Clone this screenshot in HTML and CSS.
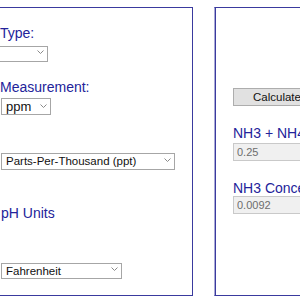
FILE: index.html
```html
<!DOCTYPE html>
<html lang="en">
<head>
  <meta charset="UTF-8">
  <title>Ammonia Calculator</title>
  <link rel="stylesheet" href="styles.css">
</head>
<body>
  <div class="panel panel-left">
    <div class="lbl lbl-type">Type:</div>
    <div class="pick pick-type">
      <select><option></option></select>
      <svg class="chev" width="7" height="4" viewBox="0 0 7 4"><path d="M0.5 0.5 L3.5 3.5 L6.5 0.5" /></svg>
    </div>

    <div class="lbl lbl-meas">Measurement:</div>
    <div class="pick pick-ppm">
      <select class="arial"><option>ppm</option></select>
      <svg class="chev" width="7" height="4" viewBox="0 0 7 4"><path d="M0.5 0.5 L3.5 3.5 L6.5 0.5" /></svg>
    </div>

    <div class="pick pick-ppt">
      <select><option>Parts-Per-Thousand (ppt)</option></select>
      <svg class="chev" width="7" height="4" viewBox="0 0 7 4"><path d="M0.5 0.5 L3.5 3.5 L6.5 0.5" /></svg>
    </div>

    <div class="lbl lbl-ph">pH Units</div>
    <div class="pick pick-temp">
      <select><option>Fahrenheit</option></select>
      <svg class="chev" width="7" height="4" viewBox="0 0 7 4"><path d="M0.5 0.5 L3.5 3.5 L6.5 0.5" /></svg>
    </div>
  </div>

  <div class="panel panel-right">
    <button class="calc">Calculate</button>
    <div class="lbl lbl-total">NH3 + NH4 Concentration</div>
    <input class="out" type="text" value="0.25" disabled>
    <div class="lbl lbl-nh3">NH3 Concentration</div>
    <input class="out out-2" type="text" value="0.0092" disabled>
  </div>
</body>
</html>
```

FILE: styles.css
```css
body {
  margin: 0;
  padding-top: 7px;
  display: flex;
  gap: 21px;
  overflow: hidden;
  height: 300px;
  background: #fff;
  font-family: "Liberation Sans", Arial, sans-serif;
}

.panel {
  box-sizing: border-box;
  height: 289px;
  border: 1px solid #3a3a9e;
  flex-shrink: 0;
  display: flex;
  flex-direction: column;
  align-items: flex-start;
}

.panel-left {
  width: 203px;
  margin-left: -10px;
  padding: 17px 0 0 10px;
}

.panel-right {
  width: 220px;
  padding: 80px 0 0 18px;
  border-left-color: #a9a9d6;
  box-shadow: inset 1px 0 0 #3a3a9e;
}

.lbl {
  font-size: 14px;
  line-height: 16px;
  color: #23239a;
  white-space: nowrap;
  margin-left: -1px;
}

.lbl-meas { margin-top: 19px; }
.lbl-ph { margin-top: 37px; margin-left: 0; }
.lbl-total { margin-top: 19px; margin-left: 0; }
.lbl-nh3 { margin-top: 19px; margin-left: 0; }

.pick {
  position: relative;
}

.pick select {
  -webkit-appearance: none;
  appearance: none;
  box-sizing: border-box;
  width: 100%;
  height: 100%;
  margin: 0;
  padding: 0 0 0 4px;
  border: 1px solid #a6a6a6;
  border-radius: 0;
  background: #fff;
  color: #111;
  font-family: "Liberation Sans", Arial, sans-serif;
  font-size: 11.5px;
  letter-spacing: 0;
  outline: none;
}

.pick select.arial {
  font-size: 13px;
}

.chev {
  position: absolute;
  right: 4px;
  top: 50%;
  margin-top: -2px;
}

.chev path {
  fill: none;
  stroke: #8a8a8a;
  stroke-width: 1;
}

.pick-type {
  width: 50px;
  height: 16px;
  margin: 3px 0 0 -3px;
}

.pick-ppm {
  width: 50px;
  height: 17px;
  margin-top: 2px;
}

.pick-ppt {
  width: 174px;
  height: 17px;
  margin-top: 37px;
}

.pick-temp {
  width: 121px;
  height: 16px;
  margin-top: 40px;
}

.calc {
  box-sizing: border-box;
  width: 88px;
  height: 18px;
  padding: 0;
  border: 1px solid #adadad;
  border-radius: 0;
  background: #e1e1e1;
  color: #111;
  font-family: "Liberation Sans", Arial, sans-serif;
  font-size: 11.5px;
}

.out {
  box-sizing: border-box;
  width: 180px;
  height: 18px;
  margin: 2px 0 0;
  padding: 0 0 0 3px;
  border: 1px solid #c9c9c9;
  background: #f0f0f0;
  color: #6d6d6d;
  font-family: "Liberation Sans", Arial, sans-serif;
  font-size: 11px;
}

.out-2 {
  margin-top: 0;
}
```
